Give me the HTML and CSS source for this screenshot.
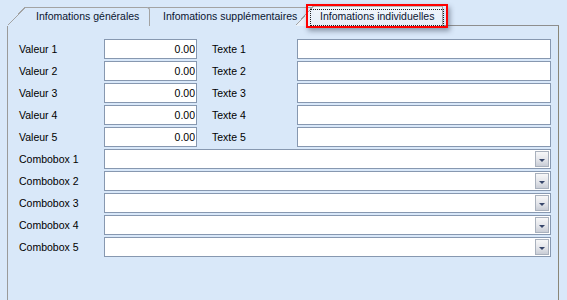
FILE: index.html
```html
<!DOCTYPE html>
<html lang="fr">
<head>
<meta charset="UTF-8">
<title>Informations individuelles</title>
<link rel="stylesheet" href="styles.css">
</head>
<body>
    <div class="tabs">
        <div class="tab tab-first">Infomations générales</div>
        <div class="tab tab-mid">Infomations supplémentaires</div>
        <div class="tab tab-active">Infomations individuelles</div>
        <div class="tab-rest"></div>
        <div class="highlight"></div>
    </div>

    <div class="panel">
        <div class="form">
            <label class="lbl">Valeur 1</label>
            <input class="field num" type="text" value="0.00">
            <label class="lbl lbl-text">Texte 1</label>
            <input class="field" type="text" value="">

            <label class="lbl">Valeur 2</label>
            <input class="field num" type="text" value="0.00">
            <label class="lbl lbl-text">Texte 2</label>
            <input class="field" type="text" value="">

            <label class="lbl">Valeur 3</label>
            <input class="field num" type="text" value="0.00">
            <label class="lbl lbl-text">Texte 3</label>
            <input class="field" type="text" value="">

            <label class="lbl">Valeur 4</label>
            <input class="field num" type="text" value="0.00">
            <label class="lbl lbl-text">Texte 4</label>
            <input class="field" type="text" value="">

            <label class="lbl">Valeur 5</label>
            <input class="field num" type="text" value="0.00">
            <label class="lbl lbl-text">Texte 5</label>
            <input class="field" type="text" value="">

            <label class="lbl">Combobox 1</label>
            <div class="combo"><span class="combo-text"></span><span class="combo-btn"></span></div>
            <label class="lbl">Combobox 2</label>
            <div class="combo"><span class="combo-text"></span><span class="combo-btn"></span></div>
            <label class="lbl">Combobox 3</label>
            <div class="combo"><span class="combo-text"></span><span class="combo-btn"></span></div>
            <label class="lbl">Combobox 4</label>
            <div class="combo"><span class="combo-text"></span><span class="combo-btn"></span></div>
            <label class="lbl">Combobox 5</label>
            <div class="combo"><span class="combo-text"></span><span class="combo-btn"></span></div>
        </div>
    </div>
</body>
</html>
```

FILE: styles.css
```css
body, html {
    margin: 0;
    padding: 0;
    height: 100%;
    overflow: hidden;
}
body {
    background-color: #d9e8f9;
    font-family: "Liberation Sans", Arial, sans-serif;
    font-size: 10.5px;
    color: #000;
}

/* Tab strip */
.tabs {
    position: relative;
    display: flex;
    align-items: flex-end;
    width: 559px;
    height: 26px;
    padding-left: 26px;
    box-sizing: border-box;
}
.tab {
    position: relative;
    box-sizing: border-box;
    height: 19px;
    line-height: 17px;
    border-top: 1px solid #a3a3a3;
    color: #0b1530;
    white-space: nowrap;
    background-color: #d9e8f9;
}
.tab::before {
    content: "";
    position: absolute;
    left: -18px;
    top: -1px;
    width: 18px;
    height: 19px;
    background: linear-gradient(to bottom right, transparent calc(50% - 1px), #a3a3a3 calc(50% - 1px), #a3a3a3 50%, #d9e8f9 50%);
}
.tab-first {
    z-index: 2;
    width: 124px;
    padding-left: 10px;
    border-right: 1px solid #a3a3a3;
    border-top-right-radius: 3px;
}
.tab-mid {
    z-index: 1;
    width: 164px;
    padding-left: 13px;
}
.tab-active {
    z-index: 3;
    width: 129px;
    height: 20px;
    line-height: 19px;
    padding-left: 6px;
    border-right: 1px solid #a3a3a3;
    border-top-color: #b8b8b8;
    background: linear-gradient(#f2f6fb, #e4eef9);
}
.tab-active::before {
    height: 20px;
    background: linear-gradient(to bottom right, transparent calc(50% - 1px), #a3a3a3 calc(50% - 1px), #a3a3a3 50%, #eaf1fa 50%);
}
/* focus rectangle */
.tab-active::after {
    content: "";
    position: absolute;
    left: -4px;
    right: -2px;
    top: 2px;
    bottom: 0;
    border: 1px dotted #222;
}
.tab-rest {
    flex: 1;
    height: 1px;
    background-color: #8e8e8e;
}

/* red annotation box */
.highlight {
    position: absolute;
    left: 306px;
    top: 4px;
    width: 142px;
    height: 24px;
    box-sizing: border-box;
    border: 2px solid #f00;
    box-shadow: 2px 3px 5px rgba(40, 50, 70, 0.45);
    z-index: 5;
}

/* Panel */
.panel {
    margin-left: 7px;
    width: 552px;
    height: calc(100% - 26px);
    box-sizing: border-box;
    border-left: 1px solid #9a9a9a;
    border-right: 1px solid #8a8677;
    padding: 13px 0 0 11px;
}
.form {
    display: grid;
    grid-template-columns: 85px 93px 100px 254px;
    grid-auto-rows: 20px;
    row-gap: 2px;
}
.lbl {
    line-height: 20px;
    white-space: nowrap;
}
.lbl-text {
    padding-left: 15px;
}
.field {
    box-sizing: border-box;
    height: 20px;
    margin: 0;
    padding: 0 1px;
    border: 1px solid #8798b0;
    border-radius: 0;
    background-color: #fff;
    font-family: "Liberation Sans", Arial, sans-serif;
    font-size: 10.5px;
    color: #000;
    outline: none;
}
.num {
    text-align: right;
}

/* Combobox */
.combo {
    grid-column: 2 / -1;
    display: flex;
    box-sizing: border-box;
    height: 20px;
    padding: 1px;
    border: 1px solid #8798b0;
    background-color: #fff;
}
.combo-text {
    flex: 1;
}
.combo-btn {
    position: relative;
    width: 14px;
    box-sizing: border-box;
    border: 1px solid #a9b1bd;
    background: linear-gradient(#f7f7f8, #e3e5ea 55%, #c9cdd6);
}
.combo-btn::after {
    content: "";
    position: absolute;
    left: 3px;
    top: 7px;
    border-left: 3px solid transparent;
    border-right: 3px solid transparent;
    border-top: 3px solid #37466a;
}
```
